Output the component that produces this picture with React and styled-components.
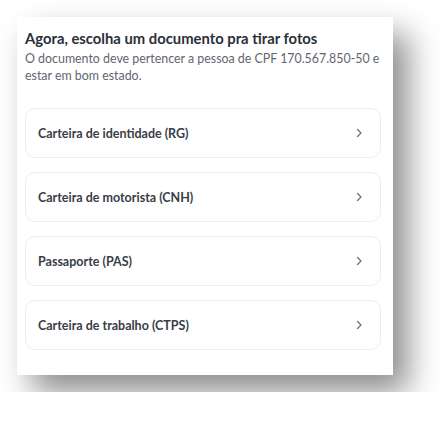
import React from "react";
import styled, { createGlobalStyle } from "styled-components";

const Global = createGlobalStyle`
  html, body { margin: 0; padding: 0; background: #ffffff; }
  body { font-family: Lato, "Noto Sans", sans-serif; -webkit-font-smoothing: antialiased; }
`;

const Page = styled.div`
  padding: 17px;
`;

const Card = styled.div`
  width: 376px;
  box-sizing: border-box;
  background: #ffffff;
  padding: 12px 12px 25px 8px;
  box-shadow: 15px 17px 30px rgba(0, 0, 0, 0.45);
`;

const Title = styled.h1`
  margin: 0;
  font-size: 14.8px;
  line-height: 18px;
  font-weight: 700;
  color: #2b2f38;
`;

const Description = styled.p`
  margin: 2.5px 0 0;
  font-size: 12.4px;
  line-height: 17px;
  color: #5f6671;
`;

const List = styled.div`
  margin-top: 24.5px;
  display: flex;
  flex-direction: column;
  gap: 14px;
`;

const Item = styled.button`
  display: flex;
  align-items: center;
  justify-content: space-between;
  height: 50px;
  box-sizing: border-box;
  padding: 0 17px 0 12px;
  background: #ffffff;
  border: 1px solid #ececec;
  border-radius: 10px;
  font-family: inherit;
  font-size: 12.5px;
  font-weight: 700;
  color: #383d47;
  text-align: left;
  cursor: pointer;
`;

const Chevron = () => (
  <svg width="7" height="10" viewBox="0 0 7 10" fill="none">
    <path d="M1.5 1.5 L5 5 L1.5 8.5" stroke="#66728a" strokeWidth="1.3" strokeLinecap="round" strokeLinejoin="round" />
  </svg>
);

const docs = [
  "Carteira de identidade (RG)",
  "Carteira de motorista (CNH)",
  "Passaporte (PAS)",
  "Carteira de trabalho (CTPS)",
];

export default function App() {
  return (
    <Page>
      <Global />
      <Card>
        <Title>Agora, escolha um documento pra tirar fotos</Title>
        <Description>
          O documento deve pertencer a pessoa de CPF 170.567.850-50 e estar em bom estado.
        </Description>
        <List>
          {docs.map((d) => (
            <Item key={d}>
              <span>{d}</span>
              <Chevron />
            </Item>
          ))}
        </List>
      </Card>
    </Page>
  );
}
